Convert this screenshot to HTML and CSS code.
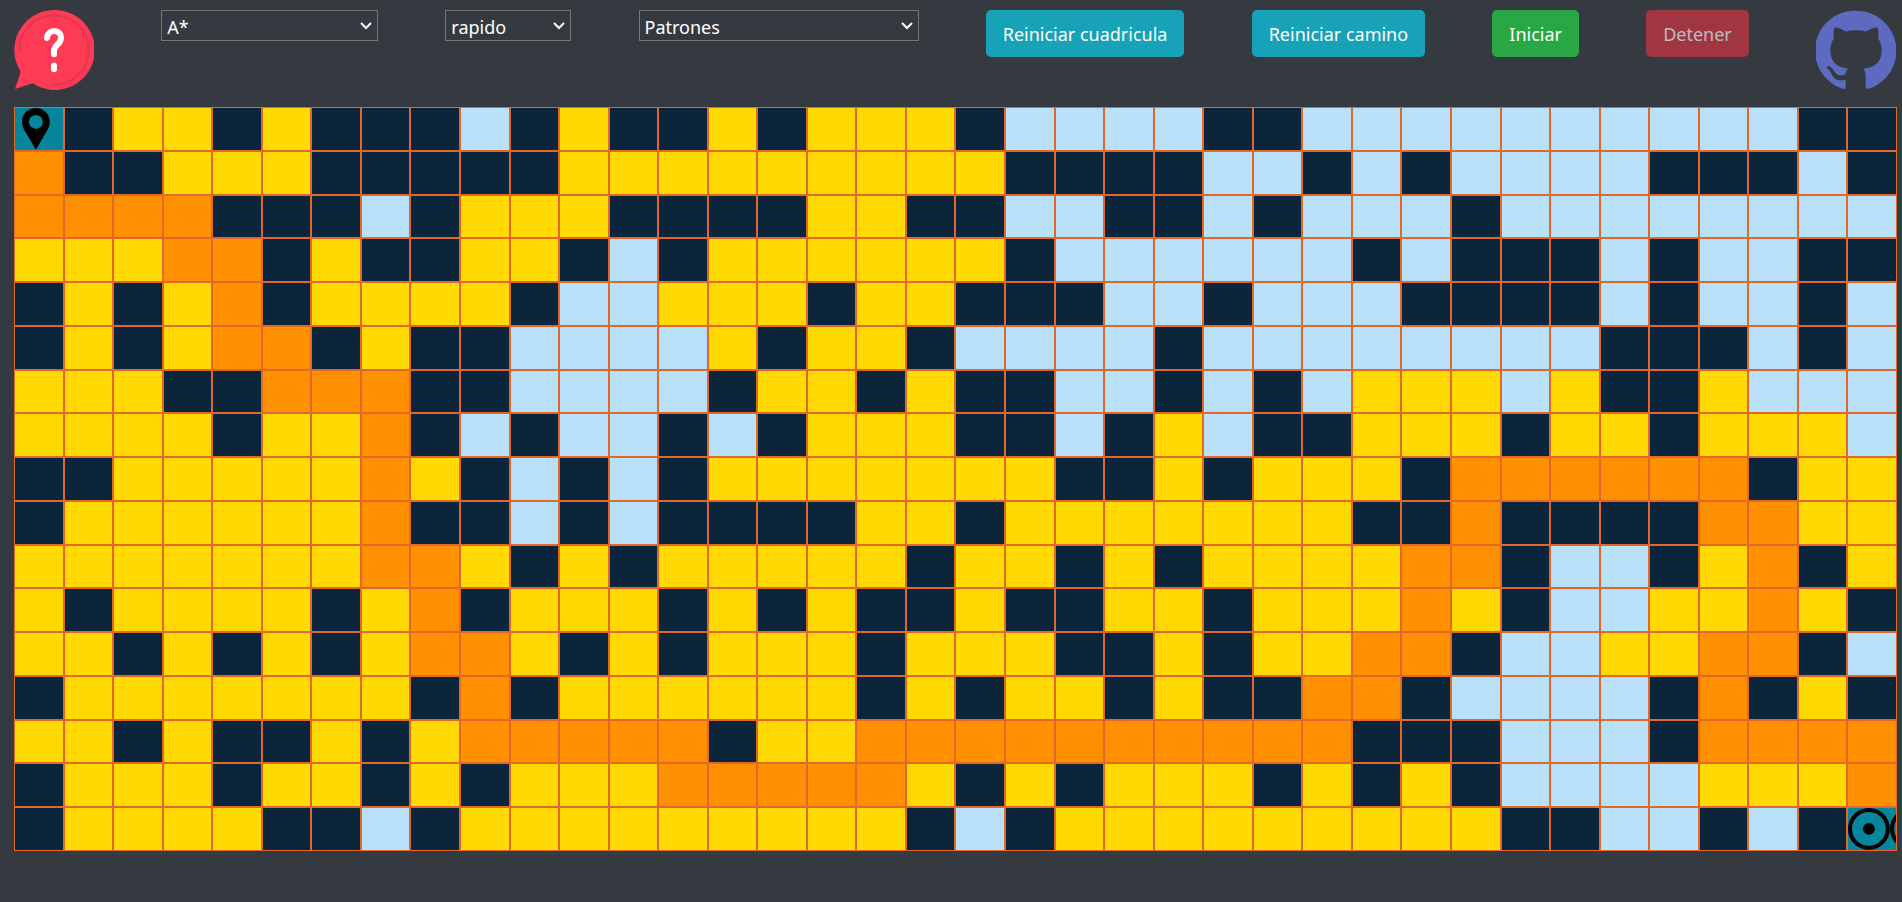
FILE: index.html
```html
<!DOCTYPE html>
<html lang="es">
<head>
<meta charset="utf-8">
<title>Buscador de caminos</title>
<link rel="stylesheet" href="styles.css">
</head>
<body>
<header class="toolbar">
  <button class="icon-button" type="button" aria-label="Ayuda">
    <svg class="icon" viewBox="0 0 80 80" aria-hidden="true">
      <path fill="#ff3a55" d="M40 0a40 40 0 1 1-21.3 73.3L1 79l5.700-17.300A40 40 0 0 1 40 0z"/>
      <path fill="none" stroke="#de3851" stroke-width="2" stroke-linecap="round" d="M5.300 41A34.700 34.700 0 1 1 39.300 74.700"/>
      <path fill="none" stroke="#fff" stroke-width="6" stroke-linecap="round" stroke-linejoin="round" d="M33 28c.5-4.500 3.500-7 7.200-7c4 0 6.800 2.800 6.800 6.800c0 3-1.500 5-3.500 6.700c-2.500 2.200-3.500 4-3.500 6.500v3.300M40 55.500v3.700"/>
    </svg>
  </button>
  <div class="picker picker-algorithm">
    <select class="picker-select" aria-label="Algoritmo">
      <option>A*</option>
    </select>
    <svg class="picker-arrow" viewBox="0 0 12 8" aria-hidden="true"><path d="M1 1l5 5l5-5"/></svg>
  </div>
  <div class="picker picker-speed">
    <select class="picker-select" aria-label="Velocidad">
      <option>rapido</option>
    </select>
    <svg class="picker-arrow" viewBox="0 0 12 8" aria-hidden="true"><path d="M1 1l5 5l5-5"/></svg>
  </div>
  <div class="picker picker-pattern">
    <select class="picker-select" aria-label="Patrones">
      <option>Patrones</option>
    </select>
    <svg class="picker-arrow" viewBox="0 0 12 8" aria-hidden="true"><path d="M1 1l5 5l5-5"/></svg>
  </div>
  <button class="button button-info" type="button">Reiniciar cuadricula</button>
  <button class="button button-info" type="button">Reiniciar camino</button>
  <button class="button button-success" type="button">Iniciar</button>
  <button class="button button-danger" type="button" disabled>Detener</button>
  <a class="icon-link" href="https://github.com" aria-label="GitHub">
    <svg class="icon" viewBox="0 0 80 80" aria-hidden="true">
      <path fill="#5c6bc0" d="M40 .7A40 40 0 0 0 26.500 78.700C28.500 79.400 29.700 78.500 29.700 77V70C27 70.500 24 70.500 21 69.700C17.500 68.500 15.500 64 14.500 62C13.500 59.800 12 59 10.700 57.500C10.300 56.500 12 56 13.500 56.500C16.500 57.500 18 61 19.500 63C22 65.800 26 65.700 29.200 64.500C29.400 62.500 30.200 60.500 31.700 59.200L31 58.300C21 57.500 14.300 51.500 14.300 40.500C14.300 35.500 15.500 31.500 18 28.500C17.500 25 17.500 21 18.300 18L20 17.300C23.500 18 27 19.700 29.700 21.500C36 19.900 44 19.900 50.300 21.500C53 19.700 56.500 18 60 17.300L61.700 18C62.500 21 62.500 25 62 28.500C64.500 31.500 65.700 35.500 65.700 40.500C65.700 51.500 59 57.500 49 58.300L47.500 59.200C49 61 49.700 63 49.700 66V77C49.700 78.500 51 79.400 53.500 78.500A40 40 0 0 0 40 .7z"/>
    </svg>
  </a>
</header>

<main class="board" id="board" aria-label="Cuadricula"></main>

<template id="start-marker">
  <svg class="marker" viewBox="0 0 42 42" aria-hidden="true">
    <path fill-rule="evenodd" d="M21 0C13 0 7 6.200 7 14c0 3.500 1.300 6 2.500 8.300L21 42l11.500-19.700C33.700 20 35 17.500 35 14C35 6.200 29 0 21 0zM21 7a7 7 0 1 1 0 14a7 7 0 0 1 0-14z"/>
  </svg>
</template>
<template id="goal-marker">
  <svg class="marker" viewBox="0 0 42 42" aria-hidden="true">
    <circle cx="21" cy="21" r="19" fill="none" stroke="#000" stroke-width="4"/>
    <circle cx="21" cy="21" r="6"/>
  </svg>
</template>
<script src="board.js"></script>
</body>
</html>
```
FILE: styles.css
```css
* {
  box-sizing: border-box;
}

body {
  margin: 0;
  min-height: 100vh;
  background: #343a40;
  font-family: "Noto Sans", "Open Sans", sans-serif;
  font-size: 18px;
  color: #fff;
}

.toolbar {
  display: flex;
  justify-content: space-between;
  align-items: flex-start;
  padding: 10px 6px 17px 14px;
}

.icon-button {
  padding: 0;
  border: 0;
  background: none;
  cursor: pointer;
}

.icon-button,
.icon-link {
  display: block;
}

.icon {
  display: block;
  width: 80px;
  height: 80px;
}

.picker {
  position: relative;
}

.picker-select {
  display: block;
  width: 100%;
  height: 31px;
  padding: 2px 24px 0 5px;
  border: 1px solid #767676;
  border-radius: 0;
  appearance: none;
  background: #343a40;
  color: #fff;
  font: inherit;
}

.picker-arrow {
  position: absolute;
  top: 12px;
  right: 6px;
  width: 12px;
  height: 8px;
  fill: none;
  stroke: #fff;
  stroke-width: 2;
  pointer-events: none;
}

.picker-algorithm {
  width: 217px;
}

.picker-speed {
  width: 126px;
}

.picker-pattern {
  width: 280px;
}

.button {
  padding: 11px 16px 9px;
  border: 1px solid transparent;
  border-radius: 5px;
  color: #fff;
  font: inherit;
  line-height: 25px;
  cursor: pointer;
}

.button-info {
  background-color: #17a2b8;
}

.button-success {
  background-color: #28a745;
}

.button-danger {
  background-color: #dc3545;
}

.button:disabled {
  opacity: 0.65;
  cursor: default;
}

.board {
  display: grid;
  grid-template-columns: repeat(38, minmax(0, 1fr));
  grid-template-rows: repeat(17, minmax(0, 1fr));
  height: calc(100vh - 158px);
  margin: 0 5px 0 14px;
}

.cell {
  display: flex;
  overflow: hidden;
  border: 1px solid #e2672a;
}

.cell-free {
  background: #bae1fa;
}

.cell-wall {
  background: #0b253a;
}

.cell-visited {
  background: #ffd900;
}

.cell-path {
  background: #ff9100;
}

.cell-start,
.cell-goal {
  background: #05869c;
}

.marker {
  flex: none;
  height: 100%;
  aspect-ratio: 1;
}
```
FILE: board.js
```js
// One character per cell: # wall, y visited, o path, . free, S start, E goal.
const rows = [
  "S#yy#y###.#y##y#yyy#....##..........##",
  "o##yyy#####yyyyyyyyy####..#.#....###.#",
  "oooo###.#yyy####yy##..##.#...#........",
  "yyyoo#y##yy#.#yyyyyy#......#.###.#..##",
  "#y#yo#yyyy#..yyy#yy###..#...####.#..#.",
  "#y#yoo#y##....y#yy#....#........###.#.",
  "yyy##ooo##....#yy#y##..#.#.yyy.y##y...",
  "yyyy#yyo#.#..#.#yyy##.#y.##yyy#yy#yyy.",
  "##yyyyyoy#.#.#yyyyyyy##y#yyy#oooooo#yy",
  "#yyyyyyo##.#.####yy#yyyyyyy##o####ooyy",
  "yyyyyyyooy#y#yyyyy#yy#y#yyyyoo#..#yo#y",
  "y#yyyy#yo#yyy#y#y##y##yy#yyyoy#..yyoy#",
  "yy#y#y#yooy#y#yyy#yyy##y#yyoo#..yyoo#.",
  "#yyyyyyy#o#yyyyyy#y#yy#y##oo#....#o#y#",
  "yy#y##y#yooooo#yyoooooooooo###...#oooo",
  "#yyy#yy#y#yyyoooooy#y#yyy#y#y#....yyyo",
  "#yyyy##.#yyyyyyyyy#.#yyyyyyyyy##..#.#E"
];

const kinds = {
  "#": "wall",
  "y": "visited",
  "o": "path",
  ".": "free",
  "S": "start",
  "E": "goal"
};

const board = document.getElementById("board");

function addMarker(cell, templateId) {
  const template = document.getElementById(templateId);
  cell.append(template.content.cloneNode(true));
}

for (const row of rows) {
  for (const symbol of row) {
    const cell = document.createElement("div");
    cell.className = "cell cell-" + kinds[symbol];
    if (symbol === "S") {
      addMarker(cell, "start-marker");
    }
    if (symbol === "E") {
      // The goal marker repeats across the width of its cell.
      addMarker(cell, "goal-marker");
      addMarker(cell, "goal-marker");
    }
    board.append(cell);
  }
}
```
